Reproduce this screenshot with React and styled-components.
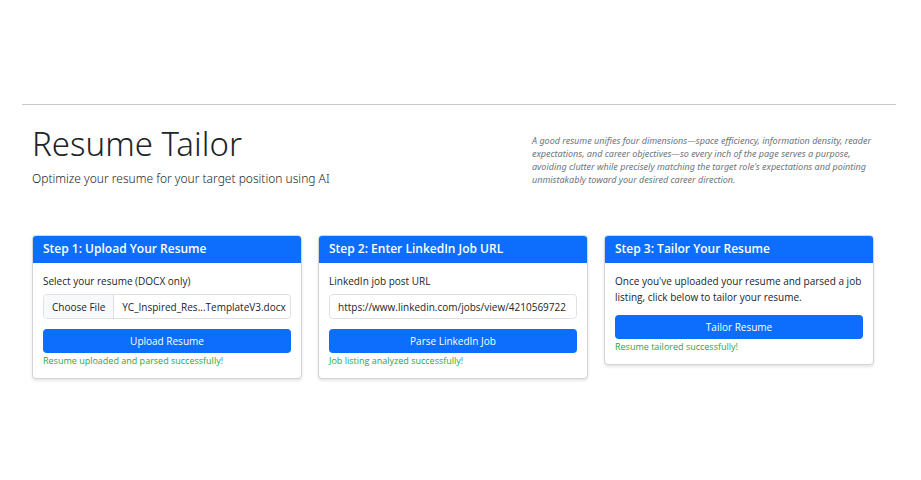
import React, { useState } from "react";
import styled, { createGlobalStyle } from "styled-components";

const GlobalStyle = createGlobalStyle`
  *, *::before, *::after { box-sizing: border-box; }
  body {
    margin: 0;
    background: #fff;
    color: #212529;
    font-family: "Segoe UI", "Open Sans", "Noto Sans", sans-serif;
    font-size: 10px;
    line-height: 16px;
  }
  h1, h2, p { margin: 0; }
`;

const Page = styled.div`
  padding: 104px 25px 40px 22px;
`;

const Divider = styled.hr`
  margin: 0;
  border: 0;
  border-top: 1px solid #c8c9ca;
`;

const Content = styled.div`
  padding: 16px 22px 0 10px;
`;

const Header = styled.header`
  display: flex;
  justify-content: space-between;
  align-items: center;
  gap: 24px;
  margin-bottom: 46px;
  font-family: "Segoe UI", "Noto Sans", "Open Sans", sans-serif;
`;

const Title = styled.h1`
  font-size: 33px;
  font-weight: 300;
  line-height: 46px;
`;

const Lead = styled.p`
  font-size: 12px;
  font-weight: 300;
  line-height: 20px;
  margin-top: 2px;
`;

const Quote = styled.p`
  flex: 0 1 342px;
  padding-top: 10px;
  font-size: 9px;
  font-style: italic;
  line-height: 13px;
  color: #6c757d;
`;

const Steps = styled.main`
  display: grid;
  grid-template-columns: repeat(3, minmax(0, 1fr));
  align-items: start;
  gap: 16px;
`;

const Card = styled.section`
  border: 1px solid #d3d4d5;
  border-radius: 4px;
  background: #fff;
  box-shadow: 0 2px 3px rgba(0, 0, 0, 0.1);
  overflow: hidden;
`;

const CardTitle = styled.h2`
  padding: 2px 10px 4px;
  background: #0d6efd;
  color: #fff;
  font-size: 12px;
  font-weight: 600;
  line-height: 21px;
`;

const CardBody = styled.form`
  padding: 10px;
`;

const Label = styled.label`
  display: block;
  margin-bottom: 5px;
`;

const Text = styled.p`
  margin-bottom: 10px;
`;

const TextInput = styled.input`
  display: block;
  width: 100%;
  height: 25px;
  margin-bottom: 10px;
  padding: 0 8px;
  border: 1px solid #dee2e6;
  border-radius: 4px;
  background: #fff;
  color: inherit;
  font: inherit;
`;

const HiddenFile = styled.input`
  position: absolute;
  width: 1px;
  height: 1px;
  opacity: 0;
`;

const FileBox = styled.label`
  display: flex;
  height: 25px;
  margin-bottom: 10px;
  border: 1px solid #dee2e6;
  border-radius: 4px;
  line-height: 24px;
  overflow: hidden;
  cursor: pointer;
`;

const FileAction = styled.span`
  padding: 0 8px;
  border-right: 1px solid #dee2e6;
  background: #f8f9fa;
  white-space: nowrap;
`;

const FileName = styled.span`
  padding: 0 8px;
  white-space: nowrap;
`;

const Button = styled.button`
  display: block;
  width: 100%;
  height: 24px;
  padding: 0;
  border: 0;
  border-radius: 4px;
  background: #0d6efd;
  color: #fff;
  font: inherit;
  cursor: pointer;
`;

const Success = styled.p`
  font-size: 9px;
  line-height: 15px;
  color: #28a745;
`;

const hold = (event) => event.preventDefault();

export default function App() {
  const [fileName, setFileName] = useState("YC_Inspired_Res...TemplateV3.docx");

  return (
    <>
      <GlobalStyle />
      <Page>
        <Divider />
        <Content>
          <Header>
            <div>
              <Title>Resume Tailor</Title>
              <Lead>Optimize your resume for your target position using AI</Lead>
            </div>
            <Quote>
              A good resume unifies four dimensions—space efficiency, information density, reader
              expectations, and career objectives—so every inch of the page serves a purpose,
              avoiding clutter while precisely matching the target role's expectations and pointing
              unmistakably toward your desired career direction.
            </Quote>
          </Header>
          <Steps>
            <Card>
              <CardTitle>Step 1: Upload Your Resume</CardTitle>
              <CardBody onSubmit={hold}>
                <Label htmlFor="resume">Select your resume (DOCX only)</Label>
                <HiddenFile
                  id="resume"
                  type="file"
                  accept=".docx"
                  onChange={(e) => e.target.files[0] && setFileName(e.target.files[0].name)}
                />
                <FileBox htmlFor="resume">
                  <FileAction>Choose File</FileAction>
                  <FileName>{fileName}</FileName>
                </FileBox>
                <Button>Upload Resume</Button>
                <Success>Resume uploaded and parsed successfully!</Success>
              </CardBody>
            </Card>
            <Card>
              <CardTitle>Step 2: Enter LinkedIn Job URL</CardTitle>
              <CardBody onSubmit={hold}>
                <Label htmlFor="job-url">LinkedIn job post URL</Label>
                <TextInput
                  id="job-url"
                  type="url"
                  defaultValue="https://www.linkedin.com/jobs/view/4210569722"
                />
                <Button>Parse LinkedIn Job</Button>
                <Success>Job listing analyzed successfully!</Success>
              </CardBody>
            </Card>
            <Card>
              <CardTitle>Step 3: Tailor Your Resume</CardTitle>
              <CardBody onSubmit={hold}>
                <Text>
                  Once you've uploaded your resume and parsed a job listing, click below to tailor
                  your resume.
                </Text>
                <Button>Tailor Resume</Button>
                <Success>Resume tailored successfully!</Success>
              </CardBody>
            </Card>
          </Steps>
        </Content>
      </Page>
    </>
  );
}
